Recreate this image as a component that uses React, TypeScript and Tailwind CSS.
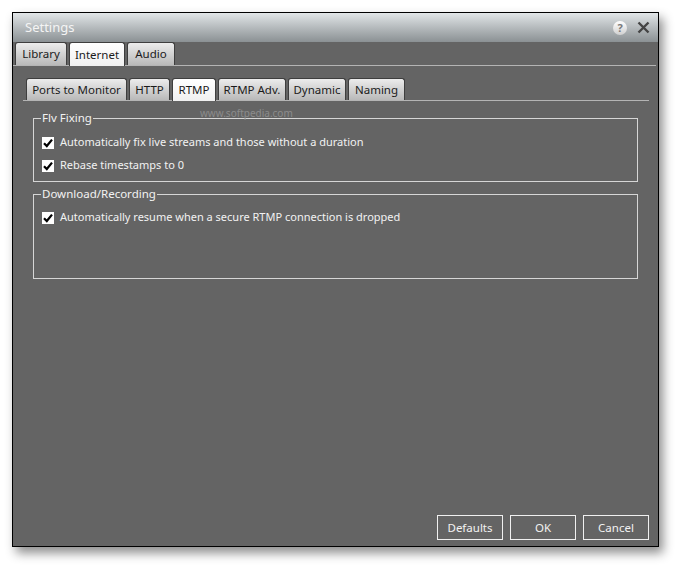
import React from 'react';

const mainTabs = ['Library', 'Internet', 'Audio'];
const subTabs = ['Ports to Monitor', 'HTTP', 'RTMP', 'RTMP Adv.', 'Dynamic', 'Naming'];

const Tab = ({ label, active, className = '' }: { label: string; active?: boolean; className?: string }) => (
  <div
    className={`flex items-center justify-center rounded-t-[3px] border border-b-0 border-[#3e3e3e] text-[11.5px] text-[#1b1b1b] ${
      active ? 'bg-gradient-to-b from-white to-[#f0f0f0]' : 'bg-gradient-to-b from-[#ececec] to-[#b9b9b9]'
    } ${className}`}
  >
    {label}
  </div>
);

const Check = ({ label }: { label: string }) => (
  <div className="flex h-[23px] items-center gap-[6px]">
    <span className="flex h-[12px] w-[12px] items-center justify-center bg-white">
      <svg width="10" height="10" viewBox="0 0 10 10">
        <path d="M1 5.2 L3.8 8 L9 1.6" fill="none" stroke="#000" strokeWidth="2.2" />
      </svg>
    </span>
    <span>{label}</span>
  </div>
);

const Group = ({ title, children, className = '' }: { title: string; children: React.ReactNode; className?: string }) => (
  <fieldset className={`border border-[#d6d6d6] px-[8px] ${className}`}>
    <legend className="ml-[-1px] px-[1px] text-[11.5px] leading-[14px] text-[#f2f2f2]">{title}</legend>
    {children}
  </fieldset>
);

export default function App() {
  return (
    <div className="relative h-[567px] w-[679px] bg-white pl-[12px] pt-[12px]" style={{ fontFamily: '"Noto Sans", "Open Sans", sans-serif' }}>
      <div className="flex h-[535px] w-[647px] flex-col border border-black bg-[#646464] shadow-[4px_6px_10px_rgba(0,0,0,0.45)]">
        {/* title bar */}
        <div className="flex h-[29px] items-center justify-between bg-gradient-to-b from-[#e2e6e8] to-[#8b9194] pl-[12px] pr-[8px]">
          <span className="text-[13px] text-[#f4f4f4]">Settings</span>
          <div className="flex items-center gap-[10px]">
            <span className="flex h-[14px] w-[14px] items-center justify-center rounded-full bg-gradient-to-b from-white to-[#d0d0d0] text-[11px] font-bold leading-none text-[#7a7a7a]">
              ?
            </span>
            <svg width="13" height="13" viewBox="0 0 13 13">
              <path d="M1.5 1.5 L11.5 11.5 M11.5 1.5 L1.5 11.5" stroke="#444" strokeWidth="2.4" />
            </svg>
          </div>
        </div>

        {/* main tabs */}
        <div className="mr-[2px] flex h-[24px] items-end gap-[2px] border-b border-[#b4b4b4] pl-[2px]">
          <Tab label={mainTabs[0]} className="h-[23px] w-[52px]" />
          <Tab label={mainTabs[1]} active className="-mb-px h-[24px] w-[56px]" />
          <Tab label={mainTabs[2]} className="h-[23px] w-[48px]" />
        </div>

        <div className="flex flex-1 flex-col pb-[6px] pl-[10px] pr-[9px]">
          {/* sub tabs */}
          <div className="mt-[12px] flex h-[23px] items-end gap-[2px] border-b border-[#b4b4b4] pl-[3px]">
            <Tab label={subTabs[0]} className="h-[22px] w-[101px]" />
            <Tab label={subTabs[1]} className="h-[22px] w-[41px]" />
            <Tab label={subTabs[2]} active className="-mb-px h-[23px] w-[44px]" />
            <Tab label={subTabs[3]} className="h-[22px] w-[68px]" />
            <Tab label={subTabs[4]} className="h-[22px] w-[58px]" />
            <Tab label={subTabs[5]} className="h-[22px] w-[57px]" />
          </div>

          <div className="flex flex-col gap-[5px] pl-[10px] pr-[11px] pt-[10px] text-[11px] text-[#f2f2f2]">
            <Group title="Flv Fixing" className="h-[71px] pt-[6px]">
              <Check label="Automatically fix live streams and those without a duration" />
              <Check label="Rebase timestamps to 0" />
            </Group>
            <Group title="Download/Recording" className="h-[92px] pt-[5px]">
              <Check label="Automatically resume when a secure RTMP connection is dropped" />
            </Group>
          </div>

          <div className="mt-auto flex justify-end gap-[7px]">
            {['Defaults', 'OK', 'Cancel'].map((b) => (
              <div key={b} className="flex h-[25px] w-[66px] items-center justify-center border border-[#f0f0f0] text-[11.5px] text-[#f2f2f2]">
                {b}
              </div>
            ))}
          </div>
        </div>
      </div>
      <span className="absolute left-[200px] top-[106px] text-[10px] text-[#8c8c8c]">www.softpedia.com</span>
    </div>
  );
}
